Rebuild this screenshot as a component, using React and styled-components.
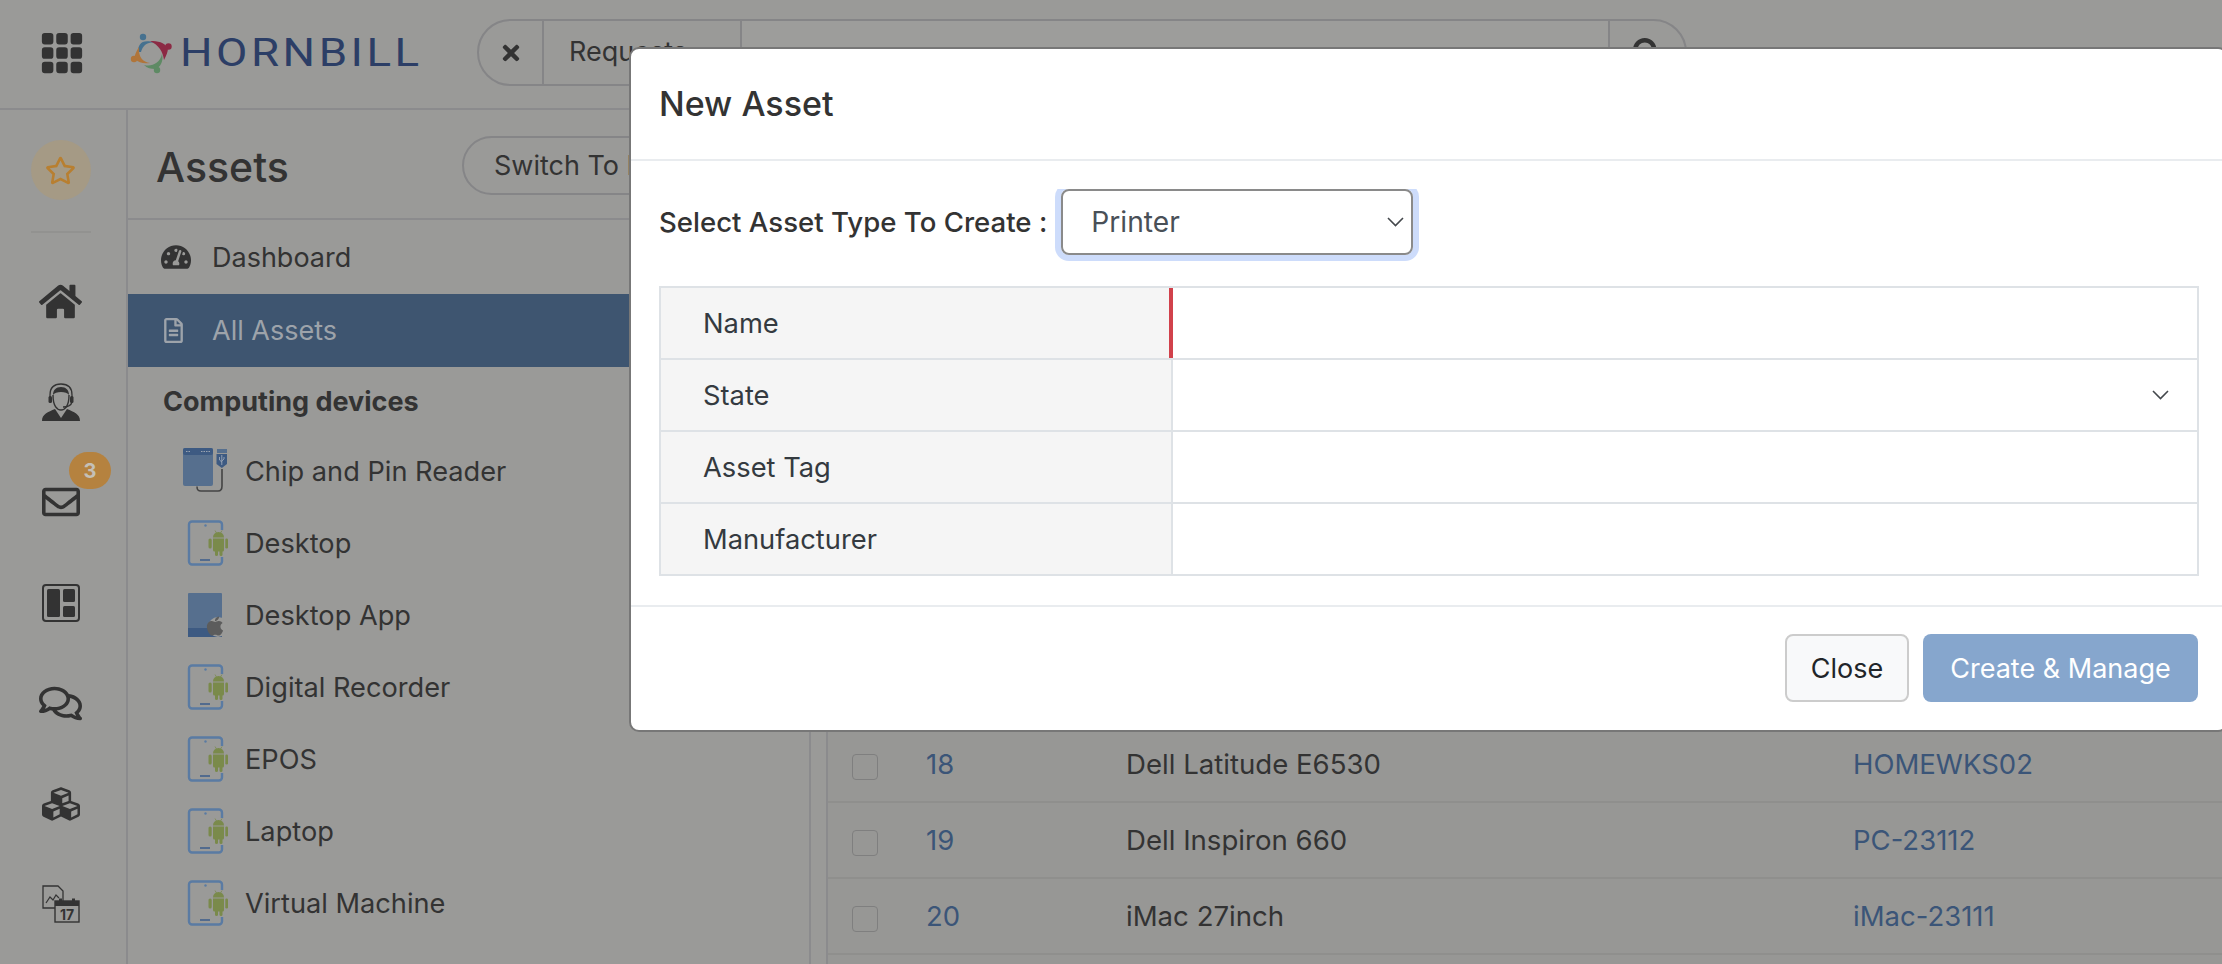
import React from "react";
import styled, { createGlobalStyle } from "styled-components";
import { BsGrid3X3GapFill } from "react-icons/bs";
import {
  FaApple,
  FaCubes,
  FaHome,
  FaRegComments,
  FaRegEnvelope,
  FaRegFileAlt,
  FaRegStar,
  FaSearch,
  FaTachometerAlt,
  FaTimes,
} from "react-icons/fa";

const GlobalStyle = createGlobalStyle`
  html, body {
    margin: 0;
    height: 964px;
    overflow: hidden;
    background: #9a9a98;
    font-family: Inter, "Liberation Sans", sans-serif;
    color: #333;
  }
  * { box-sizing: border-box; }
`;

const devices = [
  { name: "Chip and Pin Reader", icon: "usb" },
  { name: "Desktop", icon: "android" },
  { name: "Desktop App", icon: "apple" },
  { name: "Digital Recorder", icon: "android" },
  { name: "EPOS", icon: "android" },
  { name: "Laptop", icon: "android" },
  { name: "Virtual Machine", icon: "android" },
];

const assets = [
  { id: 18, name: "Dell Latitude E6530", tag: "HOMEWKS02" },
  { id: 19, name: "Dell Inspiron 660", tag: "PC-23112" },
  { id: 20, name: "iMac 27inch", tag: "iMac-23111" },
];

const Chevron = () => (
  <svg width="17" height="10" viewBox="0 0 17 10" fill="none">
    <path d="M1 1l7.500 7.500L16 1" stroke="#44484c" strokeWidth="1.6" />
  </svg>
);

const Logo = () => (
  <svg width="42" height="41" viewBox="0 0 42 41">
    <circle cx="13" cy="4" r="3.2" fill="#46718f" />
    <path d="M8 19C8 11 12 5 26 10 18 8 13 12 11 19Z" fill="#46718f" />
    <circle cx="38.5" cy="13.5" r="3.2" fill="#8c2a44" />
    <path d="M20 8C28 8 34 9 38 15 38 19 36 23 34 27 33 19 29 12 20 8Z" fill="#8c2a44" />
    <circle cx="27" cy="37" r="3.2" fill="#5e8a64" />
    <path d="M32 21C34 28 30 35 25 36 21 36 17 35 14 32 22 34 30 30 32 21Z" fill="#5e8a64" />
    <circle cx="4" cy="26" r="3.2" fill="#b0753a" />
    <path d="M9 14C6 19 4 23 5 26 9 30 14 31 20 30 13 29 8 24 9 14Z" fill="#b0753a" />
  </svg>
);

const AgentIcon = () => (
  <svg width="38" height="38" viewBox="0 0 38 38" fill="none">
    <path d="M0 38C0 31 6 29 13 26L19 35 25 26C32 29 38 31 38 38Z" fill="#333" />
    <path d="M11 12C11 23 15 27 19 27S27 23 27 12" stroke="#333" strokeWidth="1.4" />
    <path d="M11 12C13 8 25 8 27 12 27 7 24 4 19 4S11 7 11 12Z" fill="#333" />
    <path d="M8 18V12C8 4 13 1 19 1S30 4 30 12V18" stroke="#333" strokeWidth="1.3" />
    <rect x="6.5" y="13" width="3.5" height="7" rx="1.5" fill="#333" />
    <rect x="28" y="13" width="3.5" height="7" rx="1.5" fill="#333" />
    <path d="M30 19C29 23 25 24 21 24" stroke="#333" strokeWidth="1.3" />
  </svg>
);

const BoardIcon = () => (
  <svg width="38" height="38" viewBox="0 0 38 38" fill="none">
    <rect x="1" y="1" width="36" height="36" rx="3" stroke="#333" strokeWidth="2" />
    <rect x="5" y="5" width="13" height="28" rx="1.5" fill="#333" />
    <rect x="21" y="5" width="12" height="13" rx="1.5" fill="#333" />
    <rect x="21" y="22" width="12" height="11" rx="1.5" fill="#333" />
  </svg>
);

const ReportIcon = () => (
  <svg width="38" height="38" viewBox="0 0 38 38" fill="none">
    <path d="M1 1H16L21 6V23H1Z" stroke="#333" strokeWidth="1.3" />
    <path d="M4 18L8 12 11 15 14 10 17 13" stroke="#333" strokeWidth="1.2" />
    <rect x="13" y="16" width="24" height="21" fill="#9a9a98" stroke="#333" strokeWidth="1.4" />
    <rect x="13" y="16" width="24" height="5" fill="#333" />
    <rect x="17" y="13.5" width="3" height="5" fill="#333" />
    <rect x="30" y="13.5" width="3" height="5" fill="#333" />
    <text x="25" y="35" textAnchor="middle" fontSize="14" fontWeight="700" fill="#333" fontFamily="Inter, sans-serif">
      17
    </text>
  </svg>
);

// tablet outline with the android robot sat over its right edge
const AndroidTablet = () => (
  <svg width="46" height="46" viewBox="0 0 46 46" fill="none">
    <rect x="7" y="1.500" width="33" height="43" rx="3" stroke="#5a7ba3" strokeWidth="2.4" />
    <path d="M18 40H28" stroke="#40608c" strokeWidth="1.6" />
    <circle cx="23.5" cy="5.500" r="1.2" fill="#5a7ba3" />
    <rect x="37" y="10" width="6" height="27" fill="#9a9a98" />
    <g fill="#7a8a4b">
      <path d="M31 17.500A5.500 5.500 0 0 1 42 17.500Z" />
      <path d="M31 18.500H42V30A1.500 1.500 0 0 1 40.500 31.500H32.500A1.500 1.500 0 0 1 31 30Z" />
      <rect x="26.500" y="18.500" width="3.200" height="10" rx="1.600" />
      <rect x="43.300" y="18.500" width="2.700" height="10" rx="1.350" />
      <rect x="33" y="29" width="3" height="7" rx="1.500" />
      <rect x="37.500" y="29" width="3" height="7" rx="1.500" />
    </g>
    <path d="M33 10.500L34.500 13M40 10.500L38.500 13" stroke="#7a8a4b" strokeWidth="0.8" />
  </svg>
);

const DeviceIcon = ({ type }) => {
  if (type === "usb") {
    return (
      <IconBox>
        <svg width="46" height="46" viewBox="0 0 46 46" fill="none">
          <rect x="1" y="0" width="30" height="38" rx="2" fill="#566f8e" />
          <rect x="1" y="0" width="30" height="7" rx="2" fill="#3d5a82" />
          <path d="M4 3.500H8M19 3.500H28" stroke="#9aa3b0" strokeWidth="1.2" strokeDasharray="1.5 1" />
          <rect x="35" y="1" width="10" height="4" fill="#566f8e" />
          <path d="M34.500 6H45V16L39.800 20 34.500 16Z" fill="#3d5a82" />
          <path d="M39.800 7V17M37.500 9V12L39.800 14M42 9V11L39.800 13" stroke="#aab2c0" strokeWidth="0.8" />
          <path d="M40 21V38C40 42 38 43 36 43H19C16 43 15 42 15 38.500" stroke="#444" strokeWidth="1.6" />
        </svg>
      </IconBox>
    );
  }
  if (type === "apple") {
    return (
      <IconBox>
        <svg width="46" height="44" viewBox="0 0 46 44" fill="none">
          <rect x="6" y="0" width="34" height="44" rx="1" fill="#566f8e" />
          <rect x="6" y="35" width="34" height="9" fill="#3d5a82" />
          <circle cx="36" cy="34" r="10" fill="#9a9a98" />
        </svg>
        <AppleBadge>
          <FaApple size={22} />
        </AppleBadge>
      </IconBox>
    );
  }
  return (
    <IconBox>
      <AndroidTablet />
    </IconBox>
  );
};

const App = () => {
  return (
    <>
      <GlobalStyle />
      <Page>
        <TopBar>
          <GridButton>
            <BsGrid3X3GapFill size={46} />
          </GridButton>
          <Brand>
            <Logo />
            <BrandName>HORNBILL</BrandName>
          </Brand>
          <SearchGroup>
            <SearchClear>
              <FaTimes size={24} />
            </SearchClear>
            <SearchScope>Requests</SearchScope>
            <SearchField />
            <SearchButton>
              <FaSearch size={29} />
            </SearchButton>
          </SearchGroup>
        </TopBar>
        <Body>
          <Rail>
            <StarButton>
              <FaRegStar size={31} />
            </StarButton>
            <RailDivider />
            <RailItem>
              <FaHome size={43} />
            </RailItem>
            <RailItem>
              <AgentIcon />
            </RailItem>
            <RailItem>
              <FaRegEnvelope size={38} />
              <Badge>3</Badge>
            </RailItem>
            <RailItem>
              <BoardIcon />
            </RailItem>
            <RailItem>
              <FaRegComments size={43} />
            </RailItem>
            <RailItem>
              <FaCubes size={38} />
            </RailItem>
            <RailItem>
              <ReportIcon />
            </RailItem>
          </Rail>
          <Nav>
            <NavHeader>
              <NavTitle>Assets</NavTitle>
              <SwitchButton>Switch To Manager View</SwitchButton>
            </NavHeader>
            <NavLink>
              <NavLinkIcon>
                <FaTachometerAlt size={30} />
              </NavLinkIcon>
              Dashboard
            </NavLink>
            <NavLink $active>
              <NavLinkIcon>
                <FaRegFileAlt size={25} />
              </NavLinkIcon>
              All Assets
            </NavLink>
            <GroupTitle>Computing devices</GroupTitle>
            {devices.map((device) => (
              <DeviceRow key={device.name}>
                <DeviceIcon type={device.icon} />
                {device.name}
              </DeviceRow>
            ))}
          </Nav>
          <Main>
            {assets.map((asset) => (
              <AssetRow key={asset.id}>
                <Check />
                <AssetLink>{asset.id}</AssetLink>
                <span>{asset.name}</span>
                <AssetLink>{asset.tag}</AssetLink>
              </AssetRow>
            ))}
          </Main>
        </Body>
        <Modal>
          <ModalHeader>New Asset</ModalHeader>
          <ModalBody>
            <TypeRow>
              <TypeLabel>Select Asset Type To Create :</TypeLabel>
              <TypeSelect>
                Printer
                <Chevron />
              </TypeSelect>
            </TypeRow>
            <FormTable>
              <FormRow>
                <FormLabel $required>Name</FormLabel>
                <FormInput />
              </FormRow>
              <FormRow>
                <FormLabel>State</FormLabel>
                <FormSelect>
                  <Chevron />
                </FormSelect>
              </FormRow>
              <FormRow>
                <FormLabel>Asset Tag</FormLabel>
                <FormInput />
              </FormRow>
              <FormRow>
                <FormLabel>Manufacturer</FormLabel>
                <FormInput />
              </FormRow>
            </FormTable>
          </ModalBody>
          <ModalFooter>
            <CloseButton>Close</CloseButton>
            <CreateButton>Create &amp; Manage</CreateButton>
          </ModalFooter>
        </Modal>
      </Page>
    </>
  );
};

export default App;

const Page = styled.div`
  position: relative;
  width: 2222px;
  height: 964px;
  overflow: hidden;
  display: flex;
  flex-direction: column;
`;

const TopBar = styled.header`
  height: 110px;
  flex: none;
  display: flex;
  align-items: flex-start;
  border-bottom: 2px solid #8b8b8d;
`;

const GridButton = styled.div`
  width: 124px;
  height: 105px;
  padding-left: 39px;
  display: flex;
  align-items: center;
  color: #333;
`;

const Brand = styled.div`
  width: 353px;
  height: 106px;
  padding-left: 6px;
  display: flex;
  align-items: center;
  gap: 8px;
`;

const BrandName = styled.span`
  font-family: Roboto, sans-serif;
  font-size: 39px;
  font-weight: 400;
  letter-spacing: 3px;
  color: #2c3e66;
  transform: scaleX(1.17);
  transform-origin: left center;
`;

const SearchGroup = styled.div`
  width: 1210px;
  height: 67px;
  margin-top: 19px;
  display: flex;
  align-items: stretch;
  border: 2px solid #858587;
  border-radius: 34px;
  overflow: hidden;
`;

const SearchClear = styled.div`
  width: 65px;
  display: flex;
  align-items: center;
  justify-content: center;
  color: #333;
  border-right: 2px solid #858587;
`;

const SearchScope = styled.div`
  width: 198px;
  padding: 0 0 3px 25px;
  display: flex;
  align-items: center;
  font-size: 27px;
  color: #333;
  border-right: 2px solid #858587;
`;

const SearchField = styled.div`
  flex: 1;
  background: #9d9d9b;
`;

const SearchButton = styled.div`
  width: 77px;
  display: flex;
  align-items: center;
  justify-content: center;
  color: #333;
  border-left: 2px solid #858587;
`;

const Body = styled.div`
  flex: 1;
  display: flex;
  min-height: 0;
`;

const Rail = styled.aside`
  width: 128px;
  flex: none;
  padding: 30px 5px 0 0;
  display: flex;
  flex-direction: column;
  align-items: center;
  border-right: 2px solid #8b8b8d;
`;

const StarButton = styled.div`
  width: 60px;
  height: 60px;
  flex: none;
  display: flex;
  align-items: center;
  justify-content: center;
  border-radius: 50%;
  background: #a59a85;
  color: #b87f30;
`;

const RailDivider = styled.div`
  width: 60px;
  height: 2px;
  flex: none;
  margin: 31px 0 18px;
  background: #929290;
`;

const RailItem = styled.div`
  position: relative;
  width: 100%;
  height: 100.500px;
  flex: none;
  display: flex;
  align-items: center;
  justify-content: center;
  color: #333;
`;

const Badge = styled.span`
  position: absolute;
  top: 0;
  left: 69px;
  width: 42px;
  height: 37px;
  display: flex;
  align-items: center;
  justify-content: center;
  border-radius: 19px;
  background: #b5823f;
  color: #c4c0b8;
  font-size: 20px;
  font-weight: 700;
`;

const Nav = styled.nav`
  width: 683px;
  flex: none;
  border-right: 2px solid #8b8b8d;
  overflow: hidden;
`;

const NavHeader = styled.div`
  height: 110px;
  padding-left: 28px;
  display: flex;
  align-items: center;
  gap: 174px;
  border-bottom: 2px solid #8b8b8d;
`;

const NavTitle = styled.h1`
  margin: 6px 0 0;
  flex: none;
  width: 132px;
  font-size: 41px;
  font-weight: 500;
  color: #333;
`;

const SwitchButton = styled.div`
  flex: none;
  height: 59px;
  margin-top: 2px;
  padding: 0 30px;
  display: flex;
  align-items: center;
  border: 2px solid #858587;
  border-radius: 30px;
  font-size: 27px;
  color: #333;
  white-space: nowrap;
`;

const NavLink = styled.a`
  height: ${(p) => (p.$active ? "73px" : "74px")};
  padding-left: 33px;
  display: flex;
  align-items: center;
  font-size: 27px;
  color: ${(p) => (p.$active ? "#9da3aa" : "#333")};
  background: ${(p) => (p.$active ? "#3e5570" : "transparent")};
`;

const NavLinkIcon = styled.span`
  width: 51px;
  flex: none;
  display: flex;
  align-items: center;
`;

const GroupTitle = styled.div`
  height: 68px;
  padding-left: 35px;
  display: flex;
  align-items: center;
  font-size: 27px;
  font-weight: 700;
  color: #333;
`;

const DeviceRow = styled.div`
  height: 72px;
  padding-left: 54px;
  display: flex;
  align-items: center;
  gap: 17px;
  font-size: 27.200px;
  color: #333;
`;

const IconBox = styled.span`
  position: relative;
  width: 46px;
  height: 46px;
  flex: none;
  display: flex;
  align-items: center;
`;

const AppleBadge = styled.span`
  position: absolute;
  right: 2px;
  top: 23px;
  display: flex;
  color: #5c5c5c;
`;

const Main = styled.main`
  flex: 1;
  margin-left: 15px;
  padding-top: 617px;
  border-left: 2px solid #8b8b8d;
  background: #979795;
`;

const AssetRow = styled.div`
  height: 76px;
  padding-left: 24px;
  display: grid;
  grid-template-columns: 74px 200px 727px 1fr;
  align-items: center;
  border-bottom: 2px solid #8f8f8d;
  font-size: 27.600px;
  color: #333;
`;

const Check = styled.span`
  width: 26px;
  height: 26px;
  margin-top: 6px;
  border: 1px solid #7f7f7f;
  border-radius: 4px;
`;

const AssetLink = styled.span`
  color: #3b5578;
  font-size: 27.500px;
`;

const Modal = styled.section`
  position: absolute;
  left: 629px;
  top: 47px;
  width: 1599px;
  height: 685px;
  background: #fff;
  border: 2px solid #777;
  border-radius: 10px;
  display: flex;
  flex-direction: column;
`;

const ModalHeader = styled.h2`
  height: 112px;
  margin: 0;
  padding: 0 28px 2px;
  display: flex;
  align-items: center;
  flex: none;
  font-size: 34px;
  font-weight: 500;
  color: #333;
  border-bottom: 2px solid #e9ecef;
`;

const ModalBody = styled.div`
  flex: none;
  height: 444px;
  padding: 28px 28px 0;
`;

const TypeRow = styled.div`
  height: 66px;
  margin-bottom: 31px;
  display: flex;
  align-items: center;
  gap: 14px;
`;

const TypeLabel = styled.label`
  font-size: 27.600px;
  font-weight: 500;
  color: #333;
`;

// focus ring is cut off along the top edge in the original
const TypeSelect = styled.div`
  width: 352px;
  height: 66px;
  padding: 0 7px 0 28px;
  display: flex;
  align-items: center;
  justify-content: space-between;
  font-size: 28.200px;
  color: #495057;
  border: 2px solid #8a8a8a;
  border-radius: 8px;
  box-shadow: 0 0 0 6px #cddcfb;
  clip-path: inset(0 -7px -7px -7px);
`;

const FormTable = styled.div`
  width: 1540px;
  border: 2px solid #dee2e6;
  border-bottom: 0;
`;

const FormRow = styled.div`
  height: 72px;
  display: flex;
  border-bottom: 2px solid #dee2e6;
`;

const FormLabel = styled.div`
  width: 512px;
  flex: none;
  padding-left: 42px;
  display: flex;
  align-items: center;
  font-size: 27.300px;
  color: #343a40;
  background: #f5f5f5;
  border-right: ${(p) => (p.$required ? "4px solid #d1414b" : "2px solid #dee2e6")};
`;

const FormInput = styled.input`
  flex: 1;
  min-width: 0;
  padding: 0 20px;
  border: 0;
  background: #fff;
  font-size: 27px;
`;

const FormSelect = styled.div`
  flex: 1;
  padding-right: 28px;
  display: flex;
  align-items: center;
  justify-content: flex-end;
`;

const ModalFooter = styled.div`
  flex: 1;
  padding: 27px 28px 0 0;
  display: flex;
  justify-content: flex-end;
  align-items: flex-start;
  gap: 14px;
  border-top: 2px solid #e9ecef;
`;

const CloseButton = styled.button`
  width: 124px;
  height: 68px;
  font-family: inherit;
  font-size: 27px;
  color: #212529;
  background: #f8f9fa;
  border: 2px solid #ccc;
  border-radius: 8px;
`;

const CreateButton = styled.button`
  width: 275px;
  height: 68px;
  font-family: inherit;
  font-size: 27px;
  color: #fff;
  background: #86a6cd;
  border: 0;
  border-radius: 8px;
`;
